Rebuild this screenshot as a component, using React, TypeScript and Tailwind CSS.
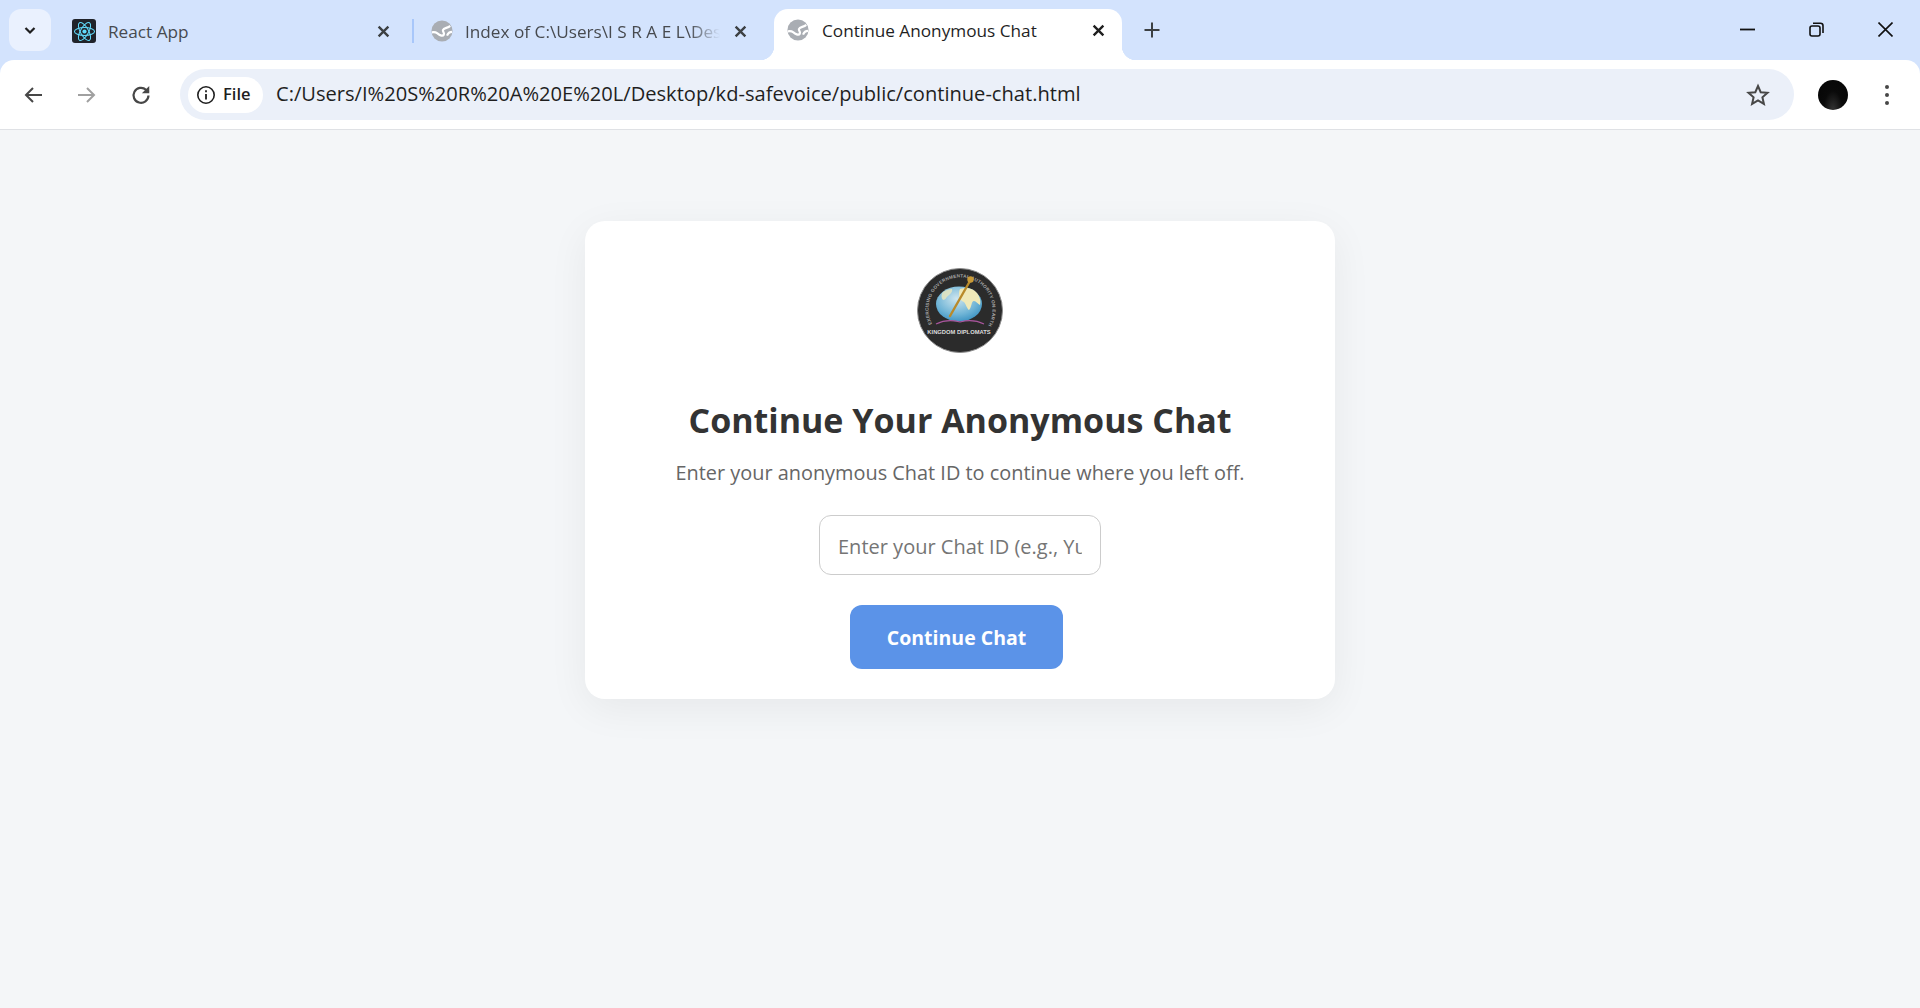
const uiFont = { fontFamily: '"Open Sans", "Noto Sans", sans-serif' };

function GlobeIcon() {
  return (
    <svg viewBox="0 0 24 24" className="w-[22px] h-[22px] shrink-0">
      <circle cx="12" cy="12" r="11.500" fill="#a9adb3" />
      <path d="M21 6.500C18 9 14 8.500 13 11c-.5 2 2 2.500 1 5-1.500 2.500-5 0-7-1.500-1.500-1-3.500-1.500-6-1" fill="none" stroke="#ffffff" strokeWidth="2.400" />
      <path d="M23 13c-3 0-4.500 1.500-5.500 4" fill="none" stroke="#ffffff" strokeWidth="2.400" />
    </svg>
  );
}

function ReactIcon() {
  return (
    <div className="w-6 h-6 rounded-[3px] bg-[#20232a] flex items-center justify-center shrink-0">
      <svg viewBox="-12 -12 24 24" className="w-[23px] h-[23px]" fill="none" stroke="#61dafb" strokeWidth="1.100">
        <circle r="2.200" fill="#61dafb" stroke="none" />
        <ellipse rx="10.500" ry="4.200" />
        <ellipse rx="10.500" ry="4.200" transform="rotate(60)" />
        <ellipse rx="10.500" ry="4.200" transform="rotate(120)" />
      </svg>
    </div>
  );
}

function CloseIcon({ color }: { color: string }) {
  return (
    <svg viewBox="0 0 12 12" className="w-[13px] h-[13px] shrink-0" fill="none" stroke={color} strokeWidth="2.200">
      <path d="M1.500 1.500l9 9M10.500 1.500l-9 9" />
    </svg>
  );
}

function Logo() {
  return (
    <svg viewBox="0 0 86 85" className="w-[86px] h-[85px] block">
      <defs>
        <path id="logoArc" d="M15 56 A32 32 0 1 1 72 56" />
        <radialGradient id="sea" cx="0.45" cy="0.35" r="0.75">
          <stop offset="0" stopColor="#cfe6ee" />
          <stop offset="0.6" stopColor="#6fb4d6" />
          <stop offset="1" stopColor="#2b87bb" />
        </radialGradient>
      </defs>
      <ellipse cx="43" cy="42.500" rx="42.500" ry="42" fill="#2b2b2b" stroke="#8c8c8c" strokeWidth="1" />
      <text fontSize="4.600" fill="#a9a9a9" fontWeight="700" textLength="132" style={{ fontFamily: '"Liberation Sans", sans-serif' }}>
        <textPath href="#logoArc">EXERCISING GOVERNMENTAL AUTHORITY ON EARTH</textPath>
      </text>
      <ellipse cx="42" cy="36" rx="23" ry="17.500" fill="url(#sea)" />
      <path d="M43 21c6-2 13-1 17 4 3 4 4 8 3 12-2-1-4-4-6-4-3 0-2 6-5 9-2-1-3-6-5-8-3-1-5-4-5-7 0-2 0-4 1-6z" fill="#efe9b8" />
      <path d="M26 24c3-2 6-3 9-3 1 3-2 5-4 7-2 1-2 4-5 4-2-2-2-6 0-8z" fill="#e6e6c0" opacity="0.850" />
      <path d="M53 13L33 48" stroke="#b98a2a" strokeWidth="2.400" strokeLinecap="round" />
      <circle cx="53.500" cy="11.500" r="3.200" fill="#c99a38" />
      <path d="M19 56c8-4 17-4 24-2 7-2 16-2 24 2" fill="none" stroke="#a8559c" strokeWidth="1.200" />
      <text x="42" y="66" textAnchor="middle" fontSize="5.800" fontWeight="700" fill="#dddddd" style={{ fontFamily: '"Liberation Sans", sans-serif' }}>
        KINGDOM DIPLOMATS
      </text>
    </svg>
  );
}

export default function App() {
  return (
    <div className="w-full min-h-[1008px] flex flex-col bg-[#f4f6f8]" style={uiFont}>
      {/* tab strip */}
      <div className="h-[60px] bg-[#d3e3fd] flex items-start relative shrink-0">
        <div className="ml-[9px] mt-[9px] w-[42px] h-[42px] rounded-xl bg-[#eaf1fe] flex items-center justify-center">
          <svg viewBox="0 0 14 14" className="w-[14px] h-[14px]" fill="none" stroke="#1f1f1f" strokeWidth="2.200">
            <path d="M2.500 5l4.500 4.500L11.500 5" />
          </svg>
        </div>

        <div className="ml-[21px] mt-[18px] w-[333px] flex items-center pr-[15px]">
          <ReactIcon />
          <span className="ml-3 pt-[2px] text-[17.2px] leading-6 text-[#474a4f] flex-1">React App</span>
          <CloseIcon color="#3c4043" />
        </div>
        <div className="mt-[19px] ml-[7px] w-[2px] h-[24px] bg-[#a8c7fa]" />
        <div className="ml-[17px] mt-[18px] w-[317px] flex items-center">
          <GlobeIcon />
          <span className="ml-[12px] pt-[2px] w-[255px] overflow-hidden whitespace-nowrap text-[17.2px] leading-6 text-[#474a4f] [mask-image:linear-gradient(to_right,black_88%,transparent)]">
            Index of C:\Users\I S R A E L\Desktop\kd-safevoice
          </span>
          <span className="ml-[14px]"><CloseIcon color="#3c4043" /></span>
        </div>

        <div className="ml-[26px] mt-[9px] w-[348px] h-[51px] bg-white rounded-t-[14px] flex items-start pl-[13px] pt-[10px] relative">
          <span className="absolute -left-[14px] bottom-0 w-[14px] h-[14px] bg-[radial-gradient(circle_at_0_0,transparent_14px,white_14.5px)]" />
          <span className="absolute -right-[14px] bottom-0 w-[14px] h-[14px] bg-[radial-gradient(circle_at_100%_0,transparent_14px,white_14.5px)]" />
          <GlobeIcon />
          <span className="ml-[13px] text-[17.2px] leading-6 text-[#1f1f1f] w-[270px] whitespace-nowrap">Continue Anonymous Chat</span>
          <span className="mt-[5px]"><CloseIcon color="#1f1f1f" /></span>
        </div>

        <div className="ml-[22px] mt-[22px]">
          <svg viewBox="0 0 16 16" className="w-4 h-4" fill="none" stroke="#3c4043" strokeWidth="2">
            <path d="M8 0.500v15M0.500 8h15" />
          </svg>
        </div>

        <div className="ml-auto flex items-center mt-[22px] pr-[27px] gap-[54px]">
          <svg viewBox="0 0 15 15" className="w-[15px] h-[15px]" stroke="#111" strokeWidth="1.800"><path d="M0 7.500h15" /></svg>
          <svg viewBox="0 0 15 15" className="w-[15px] h-[15px]" fill="none" stroke="#111" strokeWidth="1.600">
            <rect x="1" y="4" width="10" height="10" rx="2" />
            <path d="M4 1.200h7.500a2.500 2.500 0 0 1 2.500 2.500V11" />
          </svg>
          <svg viewBox="0 0 15 15" className="w-[15px] h-[15px]" fill="none" stroke="#111" strokeWidth="1.600"><path d="M0.500 0.500l14 14M14.500 0.500l-14 14" /></svg>
        </div>
      </div>

      {/* toolbar */}
      <div className="h-[70px] bg-[#d3e3fd] shrink-0">
        <div className="h-[70px] bg-white rounded-t-[14px] border-b border-[#dfe1e5] flex items-center">
          <div className="w-[180px] flex items-center shrink-0 pl-6 gap-[36px]">
            <svg viewBox="0 0 18 18" className="w-[18px] h-[18px]" fill="none" stroke="#474747" strokeWidth="2">
              <path d="M18 9H2M9 2L2 9l7 7" />
            </svg>
            <svg viewBox="0 0 18 18" className="w-[18px] h-[18px]" fill="none" stroke="#a0a0a0" strokeWidth="2">
              <path d="M0 9h16M9 2l7 7-7 7" />
            </svg>
            <svg viewBox="0 0 20 20" className="w-[22px] h-[22px] -ml-[2px]" fill="none" stroke="#474747" strokeWidth="2">
              <path d="M16.800 10.500a6.800 6.800 0 1 1-2.200-5.200l2.200 2.200" />
              <path d="M17.500 1.800v6.700h-6.700z" fill="#474747" stroke="none" />
            </svg>
          </div>
          <div className="w-[1614px] h-[51px] rounded-full bg-[#ebf0f9] flex items-center pl-2 pr-[24px] shrink-0">
            <div className="w-[75px] h-9 rounded-full bg-white flex items-center pl-2 gap-[7px] shrink-0">
              <svg viewBox="0 0 20 20" className="w-[20px] h-[20px]" fill="none" stroke="#1f1f1f" strokeWidth="1.600">
                <circle cx="10" cy="10" r="8.200" />
                <path d="M10 9v5.500M10 5.200v2" strokeWidth="1.800" />
              </svg>
              <span className="text-[16.5px] font-semibold text-[#1f1f1f]">File</span>
            </div>
            <span className="ml-[13px] text-[20.1px] text-[#1f1f1f] flex-1 whitespace-nowrap">
              C:/Users/I%20S%20R%20A%20E%20L/Desktop/kd-safevoice/public/continue-chat.html
            </span>
            <svg viewBox="0 0 24 24" className="w-6 h-6" fill="none" stroke="#474747" strokeWidth="2" strokeLinejoin="miter">
              <path d="M12 3l2.700 6.200 6.800.6-5.100 4.500 1.500 6.600L12 17.400l-5.900 3.500 1.500-6.600-5.100-4.500 6.800-.6z" />
            </svg>
          </div>
          <div className="ml-6 w-[30px] h-[30px] rounded-full bg-[radial-gradient(ellipse_at_50%_100%,#333333,#0a0a0a_45%,#050505)] shrink-0" />
          <div className="ml-[37px] flex flex-col gap-[4px] shrink-0">
            <div className="w-1 h-1 rounded-full bg-[#474747]" />
            <div className="w-1 h-1 rounded-full bg-[#474747]" />
            <div className="w-1 h-1 rounded-full bg-[#474747]" />
          </div>
        </div>
      </div>

      {/* page */}
      <div className="flex justify-center pt-[91px]">
        <div className="w-[750px] h-[478px] bg-white rounded-[20px] shadow-[0_10px_40px_rgba(0,0,0,0.06)] flex flex-col items-center pt-[47px]">
          <Logo />
          <h1 className="mt-[43px] text-[34px] leading-[48px] font-bold text-[#333333]">Continue Your Anonymous Chat</h1>
          <p className="mt-[15px] text-[19.9px] leading-[28px] text-[#666666]">Enter your anonymous Chat ID to continue where you left off.</p>
          <input
            readOnly
            placeholder="Enter your Chat ID (e.g., Yu7x92kd)"
            className="mt-[28px] w-[282px] h-[60px] px-[18px] pt-[2px] text-[20px] border border-[#cccccc] rounded-[12px] bg-white outline-none placeholder:text-[#757575]"
          />
          <button className="mt-[30px] mr-[7px] w-[213px] h-[64px] pt-[2px] rounded-[12px] bg-[#5b93e8] text-white text-[19.5px] font-bold">
            Continue Chat
          </button>
        </div>
      </div>
    </div>
  );
}
